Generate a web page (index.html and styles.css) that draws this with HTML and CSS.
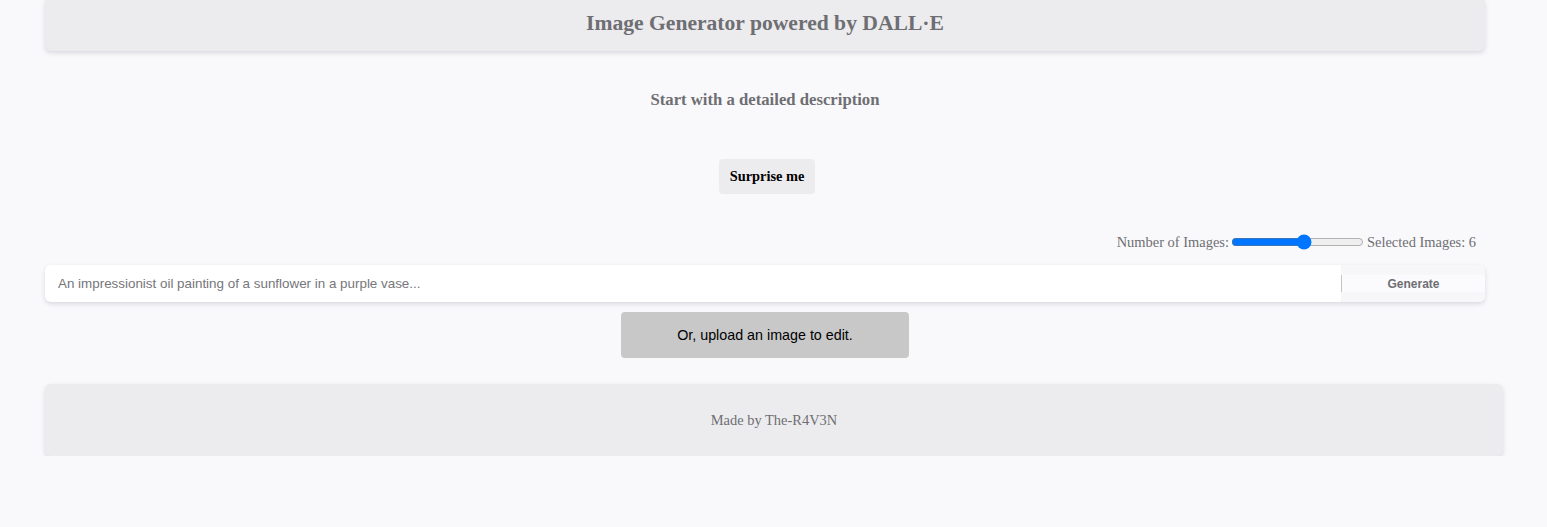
FILE: index.html
```html
<!DOCTYPE html>
<html>
<head>
<meta charset="utf-8">
<link rel="stylesheet" href="styles.css">
</head>
<body>
<div class="page">
  <header class="header">
    <h1 class="title">Image Generator powered by DALL·E</h1>
  </header>
  <h2 class="subtitle">Start with a detailed description</h2>
  <div class="surprise-row">
    <button class="surprise">Surprise me</button>
  </div>
  <div class="count-row">
    <label class="count-label">Number of Images:</label>
    <input class="range" type="range" min="1" max="10" value="6">
    <span class="count-label">Selected Images: 6</span>
  </div>
  <div class="prompt">
    <input class="prompt-input" type="text" placeholder="An impressionist oil painting of a sunflower in a purple vase...">
    <div class="gen-wrap"><button class="generate">Generate</button></div>
  </div>
  <div class="upload-row">
    <button class="upload">Or, upload an image to edit.</button>
  </div>
  <footer class="footer">
    <p class="credit">Made by The-R4V3N</p>
  </footer>
</div>
</body>
</html>
```

FILE: styles.css
```css
html, body {
  margin: 0;
  padding: 0;
  background: #f9f9fb;
}
body {
  font-family: "Liberation Serif", "Times New Roman", serif;
  color: #6e6e73;
}
.page {
  padding: 0 0 0 45px;
}
.header {
  width: 1440px;
  height: 51px;
  background: #ececee;
  border-radius: 0 0 6px 6px;
  box-shadow: 0 2px 4px rgba(120, 120, 150, 0.25);
  display: flex;
  align-items: center;
  justify-content: center;
}
.title {
  margin: 0;
  font-size: 21.6px;
  font-weight: bold;
  color: #6e6e73;
  padding-bottom: 4px;
}
.subtitle {
  width: 1440px;
  margin: 40px 0 0;
  text-align: center;
  font-size: 16.7px;
  font-weight: bold;
  color: #6e6e73;
  line-height: 18px;
}
.surprise-row {
  width: 1440px;
  display: flex;
  justify-content: center;
  margin-top: 50px;
  padding-left: 4px;
  box-sizing: border-box;
}
.surprise {
  font-family: "Liberation Serif", serif;
  font-weight: bold;
  font-size: 14.4px;
  color: #000;
  background: #ececee;
  border: none;
  border-radius: 4px;
  width: 96px;
  height: 35px;
  padding: 0;
}
.count-row {
  width: 1440px;
  display: flex;
  justify-content: flex-end;
  align-items: center;
  margin-top: 39px;
  padding-right: 9px;
  box-sizing: border-box;
  height: 18px;
}
.count-label {
  font-size: 14.45px;
  color: #6e6e73;
}
.range {
  width: 133px;
  margin: 0 3px 0 2px;
  accent-color: #0075ff;
}
.prompt {
  width: 1440px;
  height: 37px;
  margin-top: 14px;
  background: #fff;
  border-radius: 6px;
  box-shadow: 0 2px 4px rgba(120, 120, 150, 0.25);
  display: flex;
  overflow: hidden;
}
.prompt-input {
  flex: 1;
  border: none;
  outline: none;
  background: transparent;
  font-family: "Liberation Sans", Arial, sans-serif;
  font-size: 13.4px;
  padding: 0 0 0 13px;
  color: #333;
}
.prompt-input::placeholder {
  color: #76767a;
}
.gen-wrap {
  width: 144px;
  background: #f7f7f9;
  display: flex;
  align-items: center;
}
.generate {
  width: 100%;
  height: 17px;
  border: none;
  border-left: 1px solid #c4c4c4;
  background: #fbfbfd;
  font-family: "Liberation Sans", Arial, sans-serif;
  font-weight: bold;
  font-size: 12px;
  color: #6e6e73;
  padding: 0;
}
.upload-row {
  width: 1440px;
  display: flex;
  justify-content: center;
  margin-top: 10px;
}
.upload {
  width: 288px;
  height: 46px;
  background: #c8c8c8;
  border: none;
  border-radius: 4px;
  font-family: "Liberation Sans", Arial, sans-serif;
  font-size: 14.3px;
  color: #000;
  padding: 0;
}
.footer {
  width: 1458px;
  height: 72px;
  margin-top: 26px;
  background: #ececee;
  border-radius: 6px;
  box-shadow: 0 2px 4px rgba(120, 120, 150, 0.25);
  display: flex;
  align-items: center;
  justify-content: center;
}
.credit {
  margin: 0;
  font-size: 14.45px;
  color: #6e6e73;
}
```
